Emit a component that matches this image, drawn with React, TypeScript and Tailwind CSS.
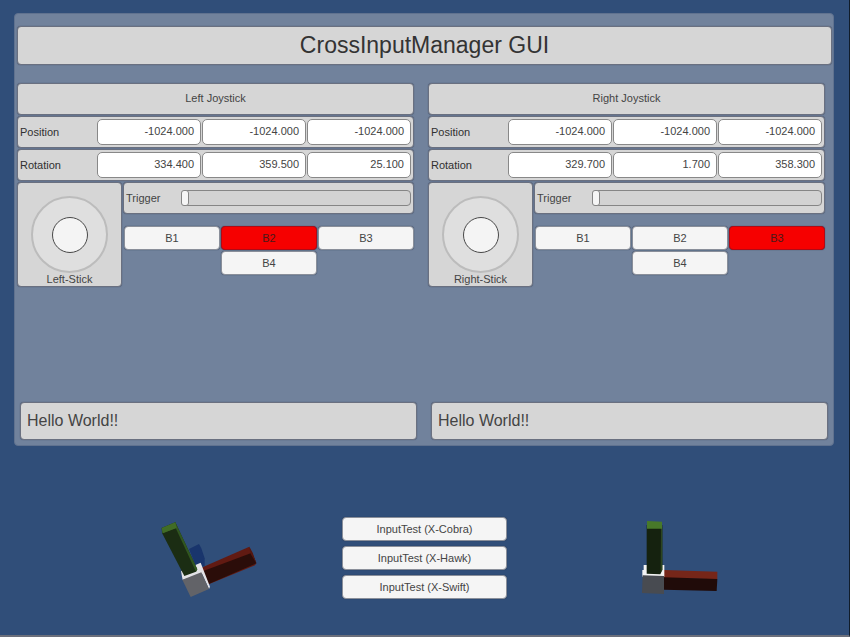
import React from "react";

const box =
  "rounded-[4px] border border-[#6a7080] bg-[#d6d6d6] shadow-[0_0_1px_#38445c]";
const button =
  "flex h-6 items-center justify-center rounded-[4px] border border-[#8a8f9a] bg-[#f5f5f5] shadow-[0_0_1px_#26344e]";

type Side = {
  name: string;
  position: string[];
  rotation: string[];
  active: string;
};

const sides: Side[] = [
  {
    name: "Left",
    position: ["-1024.000", "-1024.000", "-1024.000"],
    rotation: ["334.400", "359.500", "25.100"],
    active: "B2",
  },
  {
    name: "Right",
    position: ["-1024.000", "-1024.000", "-1024.000"],
    rotation: ["329.700", "1.700", "358.300"],
    active: "B3",
  },
];

function VectorRow({ label, values }: { label: string; values: string[] }) {
  return (
    <div className={`${box} flex h-8 items-center pr-[2px] pl-[2px]`}>
      <span className="w-[77px] shrink-0 text-[#303030]">{label}</span>
      <div className="grid flex-1 grid-cols-3 gap-[1px]">
        {values.map((value, i) => (
          <div
            key={i}
            className="h-[26px] rounded-[5px] border border-[#888] bg-white pr-[6px] text-right leading-[22px]"
          >
            {value}
          </div>
        ))}
      </div>
    </div>
  );
}

function PadButton({ label, active }: { label: string; active: string }) {
  return (
    <div
      className={
        label === active
          ? "flex h-6 items-center justify-center rounded-[4px] border border-[#b00a16] bg-[#f60000] text-[#4a1a1a] shadow-[0_0_1px_#26344e]"
          : button
      }
    >
      {label}
    </div>
  );
}

function Joystick({ side }: { side: Side }) {
  return (
    <section className="w-[397px]">
      <div className={`${box} flex h-8 items-center justify-center pb-[2px]`}>
        {side.name} Joystick
      </div>
      <div className="mt-[1px] flex flex-col gap-[1px]">
        <VectorRow label="Position" values={side.position} />
        <VectorRow label="Rotation" values={side.rotation} />
      </div>
      <div className="mt-[1px] flex gap-[1px]">
        <div
          className={`${box} flex h-[105px] w-[105px] flex-col items-center pt-[13px]`}
        >
          <div className="flex size-[77px] shrink-0 items-center justify-center rounded-full border-2 border-[#bcbcbc] bg-[#dfdfdf]">
            <div className="size-9 rounded-full border border-[#484848] bg-[#f4f4f4]" />
          </div>
          <span className="leading-[12px]">{side.name}-Stick</span>
        </div>
        <div className="flex-1">
          <div className={`${box} flex h-8 items-center pr-[2px] pl-[2px]`}>
            <span className="w-[55px]">Trigger</span>
            <div className="h-4 flex-1 rounded-[4px] border border-[#858585] bg-[#d2d2d2]">
              <div className="-mt-px -ml-px h-4 w-2 rounded-[3px] border border-[#858585] bg-[#f5f5f5]" />
            </div>
          </div>
          <div className="mt-[12px] ml-[1px] grid grid-cols-3 gap-x-[1px] gap-y-[1px]">
            <PadButton label="B1" active={side.active} />
            <PadButton label="B2" active={side.active} />
            <PadButton label="B3" active={side.active} />
            <div />
            <PadButton label="B4" active={side.active} />
          </div>
        </div>
      </div>
    </section>
  );
}

function LeftGizmo() {
  return (
    <svg className="h-[95px] w-[120px]" viewBox="0 0 360 285">
      <path d="M117 117L147 102L154 115L164 145L164 168L140 175Z" fill="#19356c" />
      <path d="M154 173L298 110L319 160L315 166L176 223Z" fill="#611a12" />
      <path d="M158 184L306 128L319 160L176 222Z" fill="#2b0d09" />
      <path d="M298 110L308 128L319 160L302 132Z" fill="#531711" />
      <path d="M93 184L152 158L180 230L177 237L156 191L98 210Z" fill="#e3e3e7" />
      <path d="M97 209L154 187L177 237L122 261Z" fill="#626368" />
      <path d="M35 54L76 37L142 178L138 185L103 198L36 69Z" fill="#1b2d13" />
      <path d="M35 54L76 37L142 178L138 185L77 54L38 70Z" fill="#315620" />
      <path d="M35 54L76 37L80 54L38 70Z" fill="#416c26" />
    </svg>
  );
}

function RightGizmo() {
  return (
    <svg className="h-[95px] w-[100px]" viewBox="0 0 300 285">
      <path d="M102 180L262 185V208L102 204Z" fill="#762619" />
      <path d="M102 202L262 207L260 243L102 239Z" fill="#200b09" />
      <path d="M41 165H103V200H37V180H41Z" fill="#f4f4f4" />
      <path d="M38 196L102 198V252L36 249Z" fill="#484b51" />
      <path d="M50 45H97V180L91 193L50 191Z" fill="#15220f" />
      <path d="M93 50H97V180L92 187Z" fill="#2c4520" />
      <path d="M51 33L96 35V56H51Z" fill="#48792a" />
    </svg>
  );
}

export default function App() {
  return (
    <main className="h-[637px] w-[850px] overflow-hidden border-r border-b-2 border-r-[#101c2a] border-b-[#6b6f7b] bg-[#304e79] pt-[13px] font-['Liberation_Sans',Arial,sans-serif] text-[11px] text-[#444]">
      <div className="ml-[14px] h-[433px] w-[820px] rounded-[4px] border border-[#60728f] bg-[#71829c] px-[2px] pt-[12px]">
        <h1
          className={`${box} flex h-[39px] w-[815px] items-center justify-center text-[23px] text-[#333]`}
        >
          CrossInputManager GUI
        </h1>
        <div className="mt-[18px] flex gap-[14px]">
          {sides.map((side) => (
            <Joystick key={side.name} side={side} />
          ))}
        </div>
        <div className="mt-[115px] ml-[3px] flex gap-[14px] text-[16px]">
          {sides.map((side) => (
            <div
              key={side.name}
              className={`${box} flex h-[38px] w-[397px] items-center pl-[6px]`}
            >
              Hello World!!
            </div>
          ))}
        </div>
      </div>
      <div className="mt-[64px] flex items-start">
        <div className="ml-[150px] w-[192px]">
          <LeftGizmo />
        </div>
        <div className="mt-[7px] flex w-[165px] flex-col gap-[5px]">
          <div className={button}>InputTest (X-Cobra)</div>
          <div className={button}>InputTest (X-Hawk)</div>
          <div className={button}>InputTest (X-Swift)</div>
        </div>
        <div className="ml-[123px]">
          <RightGizmo />
        </div>
      </div>
    </main>
  );
}
